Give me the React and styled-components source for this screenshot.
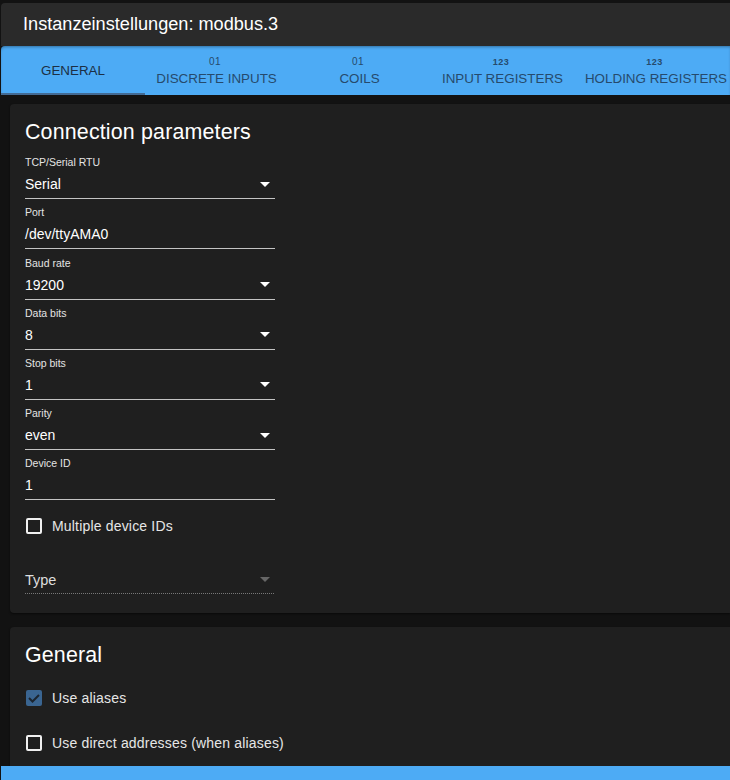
import React from "react";
import styled, { createGlobalStyle } from "styled-components";

const Global = createGlobalStyle`
  html, body { margin: 0; padding: 0; background: #121212; overflow: hidden; }
  * { box-sizing: border-box; }
  body { font-family: "Liberation Sans", Arial, sans-serif; color: #fff; }
`;
const Page = styled.div`
  width: 730px; height: 780px; padding: 3px 0 0 1px;
  display: flex; flex-direction: column; overflow: hidden; background: #121212;
`;
const Header = styled.header`
  height: 43px; flex: none; background: #2a2a2a; border-radius: 4px 0 0 0;
  display: flex; align-items: center; padding-left: 22px;
  font-size: 18.15px; color: #fff;
`;
const Tabs = styled.nav`
  height: 49px; flex: none; background: #4dabf5; display: flex;
  border-radius: 4px 0 0 0; box-shadow: inset 0 2px 3px -1px rgba(0,0,0,.35);
`;
const Tab = styled.div`
  width: ${p => p.$w}px; flex: none; position: relative;
  display: flex; flex-direction: column; align-items: center; justify-content: center;
  color: ${p => (p.$active ? "#1c2f44" : "#264a6c")};
  font-size: 13.4px; line-height: 16px; white-space: nowrap; padding-top: ${p => (p.$active ? 2 : 4)}px;
  border-bottom: 2px solid ${p => (p.$active ? "#436a93" : "transparent")};
`;
const TabIcon = styled.span`
  font-size: ${p => (p.$bold ? 9 : 10)}px; font-weight: ${p => (p.$bold ? 700 : 400)};
  line-height: 12px; margin: 0 3px 3px 0; letter-spacing: .5px;
`;
const Content = styled.main`
  flex: 1; min-height: 0; overflow: hidden; padding: 9px 0 0 9px;
  display: flex; flex-direction: column; gap: 14px;
`;
const Card = styled.section`
  flex: none; background: #1f1f1f; border-radius: 4px 0 0 4px;
  padding: 15px 15px 0; height: ${p => p.$h}px;
  box-shadow: 0 1px 2px rgba(0,0,0,.5);
`;
const Title = styled.h2`
  margin: 0; font-size: 21.4px; font-weight: 400; line-height: 26px; color: #fff; letter-spacing: .17px;
`;
const Fields = styled.div`
  width: 250px; margin-top: 4px; display: flex; flex-direction: column;
`;
const Field = styled.div`
  height: 50.2px; display: flex; flex-direction: column; justify-content: flex-end;
`;
const Label = styled.div`
  font-size: 10.5px; line-height: 14px; color: #e4e4e4;
`;
const Value = styled.div`
  height: 30px; display: flex; align-items: center; justify-content: space-between;
  font-size: 14px; color: #fff; padding: 2px 5px 1px 0;
  border-bottom: 1px solid #c4c4c4;
`;
const Arrow = styled.svg`
  width: 10px; height: 5px; flex: none; fill: ${p => (p.$dim ? "#666" : "#fff")};
`;
const CheckRow = styled.label`
  display: flex; align-items: center; gap: 10px; height: 18px; font-size: 14px;
  color: #e6e6e6; letter-spacing: .18px; margin-top: ${p => p.$mt}px;
`;
const Box = styled.span`
  width: 16px; height: 16px; border: 2px solid #f0f0f0; border-radius: 2px; flex: none; margin-left: 1px;
`;
const CheckedBox = styled.svg`
  width: 16px; height: 16px; flex: none; margin-left: 1px; display: block;
`;
const TypeSelect = styled.div`
  width: 249px; height: 28px; margin-top: 31px; display: flex; align-items: center;
  justify-content: space-between; padding-right: 4px;
  font-size: 14.5px; color: #ddd; border-bottom: 1px dotted #777;
`;
const BottomBar = styled.div`
  height: 14px; flex: none; background: #4dabf5;
`;

const arrow = dim => (
  <Arrow $dim={dim} viewBox="0 0 10 5"><path d="M0 0h10L5 5z" /></Arrow>
);
const fields = [
  ["TCP/Serial RTU", "Serial", true],
  ["Port", "/dev/ttyAMA0", false],
  ["Baud rate", "19200", true],
  ["Data bits", "8", true],
  ["Stop bits", "1", true],
  ["Parity", "even", true],
  ["Device ID", "1", false],
];

export default function App() {
  return (
    <Page>
      <Global />
      <Header>Instanzeinstellungen: modbus.3</Header>
      <Tabs>
        <Tab $w={144} $active>GENERAL</Tab>
        <Tab $w={143}><TabIcon>01</TabIcon>DISCRETE INPUTS</Tab>
        <Tab $w={143}><TabIcon>01</TabIcon>COILS</Tab>
        <Tab $w={143}><TabIcon $bold>123</TabIcon>INPUT REGISTERS</Tab>
        <Tab $w={164}><TabIcon $bold>123</TabIcon>HOLDING REGISTERS</Tab>
      </Tabs>
      <Content>
        <Card $h={509}>
          <Title>Connection parameters</Title>
          <Fields>
            {fields.map(([l, v, sel]) => (
              <Field key={l}>
                <Label>{l}</Label>
                <Value>{v}{sel && arrow(false)}</Value>
              </Field>
            ))}
          </Fields>
          <CheckRow $mt={17}><Box />Multiple device IDs</CheckRow>
          <TypeSelect>Type{arrow(true)}</TypeSelect>
        </Card>
        <Card $h={200}>
          <Title>General</Title>
          <CheckRow $mt={21}>
            <CheckedBox viewBox="0 0 16 16">
              <rect width="16" height="16" rx="2" fill="#3a6591" />
              <path d="M3 8l3.5 3.5L13 5" fill="none" stroke="#1b2530" strokeWidth="2" />
            </CheckedBox>
            Use aliases
          </CheckRow>
          <CheckRow $mt={27}><Box />Use direct addresses (when aliases)</CheckRow>
        </Card>
      </Content>
      <BottomBar />
    </Page>
  );
}
